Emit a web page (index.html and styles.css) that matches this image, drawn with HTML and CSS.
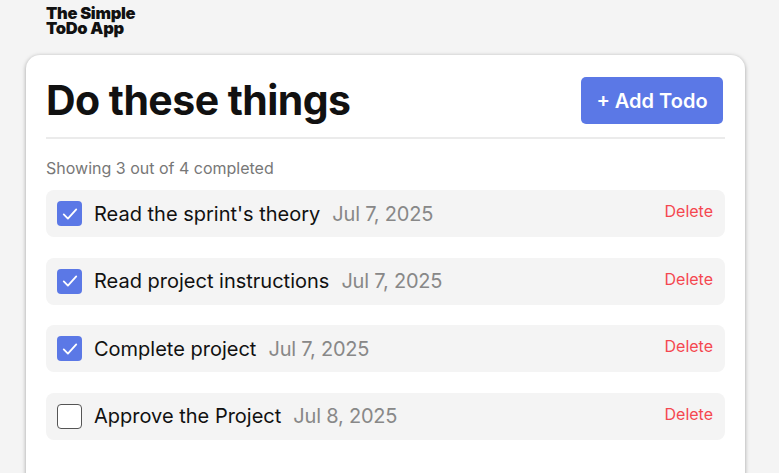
FILE: index.html
```html
<!DOCTYPE html>
<html>
<head>
<meta charset="utf-8">
<link rel="stylesheet" href="styles.css">
</head>
<body>
<div class="logo"><div class="logo-line">The Simple</div><div class="logo-line">ToDo App</div></div>
<main class="card">
  <header class="head">
    <h1 class="title">Do these things</h1>
    <button class="add">+ Add Todo</button>
  </header>
  <p class="status">Showing 3 out of 4 completed</p>
  <ul class="list">
    <li class="row">
      <span class="check on"><svg viewBox="0 0 24 24" width="20" height="20"><path d="M4.5 12.5l5 5L19.5 6.5" fill="none" stroke="#fff" stroke-width="2.2" stroke-linecap="round" stroke-linejoin="round"/></svg></span>
      <span class="name">Read the sprint's theory</span>
      <span class="date">Jul 7, 2025</span>
      <span class="del">Delete</span>
    </li>
    <li class="row">
      <span class="check on"><svg viewBox="0 0 24 24" width="20" height="20"><path d="M4.5 12.5l5 5L19.5 6.5" fill="none" stroke="#fff" stroke-width="2.2" stroke-linecap="round" stroke-linejoin="round"/></svg></span>
      <span class="name">Read project instructions</span>
      <span class="date">Jul 7, 2025</span>
      <span class="del">Delete</span>
    </li>
    <li class="row">
      <span class="check on"><svg viewBox="0 0 24 24" width="20" height="20"><path d="M4.5 12.5l5 5L19.5 6.5" fill="none" stroke="#fff" stroke-width="2.2" stroke-linecap="round" stroke-linejoin="round"/></svg></span>
      <span class="name">Complete project</span>
      <span class="date">Jul 7, 2025</span>
      <span class="del">Delete</span>
    </li>
    <li class="row">
      <span class="check"></span>
      <span class="name">Approve the Project</span>
      <span class="date">Jul 8, 2025</span>
      <span class="del">Delete</span>
    </li>
  </ul>
</main>
</body>
</html>
```
FILE: styles.css
```css
* { box-sizing: border-box; }
html, body { margin: 0; padding: 0; }
body {
  background: #f4f4f4;
  font-family: Inter, "Noto Sans", sans-serif;
  color: #111;
  height: 473px;
  overflow: hidden;
}
.logo {
  padding: 6px 0 0 46px;
  font-size: 16.5px;
  font-weight: 900;
  letter-spacing: -0.3px;
  color: #111;
}
.logo-line {
  height: 14.5px;
  line-height: 14.5px;
}
.card {
  margin: 20px 0 0 26px;
  width: 719px;
  height: 440px;
  background: #fff;
  border-radius: 14px;
  box-shadow: 0 1px 4px rgba(0,0,0,0.35);
  padding: 22px 20px 0 20px;
}
.head {
  display: flex;
  align-items: center;
  justify-content: space-between;
  padding-bottom: 13px;
  border-bottom: 2px solid #ebebeb;
}
.title {
  margin: 0;
  font-size: 41px;
  font-weight: 700;
  letter-spacing: -0.55px;
  line-height: 47px;
}
.add {
  width: 142px;
  height: 47px;
  border: 0;
  border-radius: 5px;
  background: #5b78e6;
  color: #fff;
  font-family: inherit;
  font-size: 20px;
  font-weight: 600;
  margin-right: 2px;
}
.status {
  margin: 19px 0 12px;
  font-size: 16px;
  color: #777;
  line-height: 20px;
}
.list {
  list-style: none;
  margin: 0;
  padding: 0;
  display: flex;
  flex-direction: column;
  gap: 20.5px;
}
.row {
  display: flex;
  align-items: center;
  height: 47px;
  background: #f4f4f4;
  border-radius: 8px;
  padding: 0 12px 0 11px;
}
.check {
  width: 25px;
  height: 25px;
  border-radius: 4px;
  border: 1.5px solid #555;
  display: flex;
  align-items: center;
  justify-content: center;
  margin-right: 12px;
  background: #fff;
}
.check.on {
  background: #5b78e6;
  border: 0;
}
.name {
  font-size: 20px;
  color: #111;
}
.date {
  font-size: 20px;
  color: #888;
  margin-left: 12px;
  letter-spacing: -0.2px;
}
.del {
  margin-left: auto;
  font-size: 16px;
  color: #f5474f;
  margin-top: -5px;
}
```
